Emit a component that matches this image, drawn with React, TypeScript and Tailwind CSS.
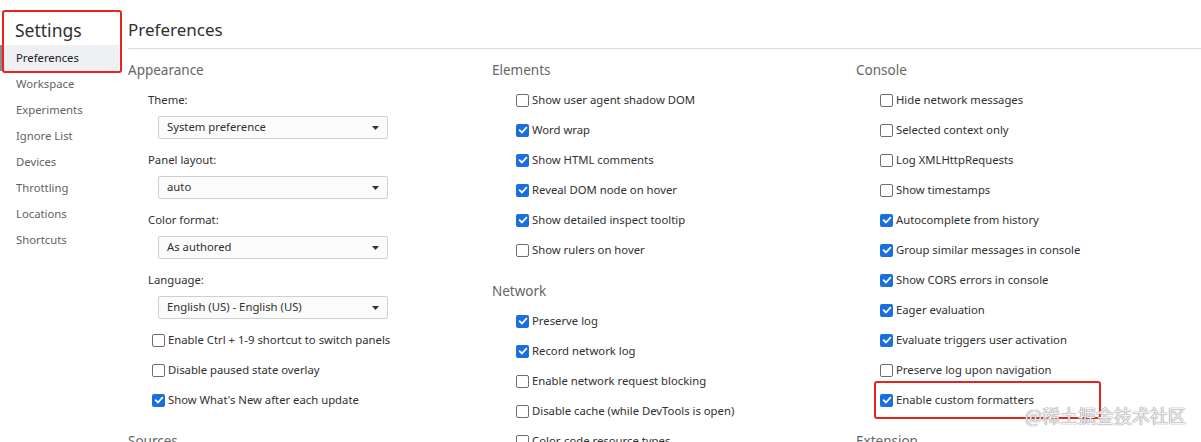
import React from "react";

type Item = { label: string; checked?: boolean };

const navItems = ["Preferences", "Workspace", "Experiments", "Ignore List", "Devices", "Throttling", "Locations", "Shortcuts"];

const selects = [
    { label: "Theme:", value: "System preference" },
    { label: "Panel layout:", value: "auto" },
    { label: "Color format:", value: "As authored" },
    { label: "Language:", value: "English (US) - English (US)" },
];

const appearanceChecks: Item[] = [
    { label: "Enable Ctrl + 1-9 shortcut to switch panels" },
    { label: "Disable paused state overlay" },
    { label: "Show What's New after each update", checked: true },
];

const elements: Item[] = [
    { label: "Show user agent shadow DOM" },
    { label: "Word wrap", checked: true },
    { label: "Show HTML comments", checked: true },
    { label: "Reveal DOM node on hover", checked: true },
    { label: "Show detailed inspect tooltip", checked: true },
    { label: "Show rulers on hover" },
];

const network: Item[] = [
    { label: "Preserve log", checked: true },
    { label: "Record network log", checked: true },
    { label: "Enable network request blocking" },
    { label: "Disable cache (while DevTools is open)" },
    { label: "Color-code resource types" },
];

const consoleItems: Item[] = [
    { label: "Hide network messages" },
    { label: "Selected context only" },
    { label: "Log XMLHttpRequests" },
    { label: "Show timestamps" },
    { label: "Autocomplete from history", checked: true },
    { label: "Group similar messages in console", checked: true },
    { label: "Show CORS errors in console", checked: true },
    { label: "Eager evaluation", checked: true },
    { label: "Evaluate triggers user activation", checked: true },
    { label: "Preserve log upon navigation" },
    { label: "Enable custom formatters", checked: true },
];

function Checkbox({ checked }: { checked?: boolean }) {
    if (checked) {
        return (
            <span className="flex-none size-[13px] rounded-[2px] bg-[#1a6fe0] flex items-center justify-center">
                <svg className="size-[10px]" viewBox="0 0 10 10" fill="none">
                    <path d="M1.6 5.2 L4 7.5 L8.4 2.6" stroke="white" strokeWidth="1.8" strokeLinecap="round" strokeLinejoin="round" />
                </svg>
            </span>
        );
    }
    return <span className="flex-none size-[13px] rounded-[2px] border border-[#6f6f6f] bg-white" />;
}

function CheckRow({ item }: { item: Item }) {
    return (
        <div className="h-[30px] flex items-center pl-[24px] gap-[3px] text-[#303030]">
            <Checkbox checked={item.checked} />
            <span className="whitespace-nowrap">{item.label}</span>
        </div>
    );
}

function Heading({ children, first }: { children: React.ReactNode; first?: boolean }) {
    return (
        <div className={`${first ? "mt-[11px]" : "mt-[16px]"} mb-[5px] leading-[20px] text-[13.5px] text-[#666]`}>{children}</div>
    );
}

export default function App() {
    return (
        <div className="relative w-[1201px] h-[442px] overflow-hidden bg-white font-['Noto_Sans',_sans-serif] text-[11.3px] flex">
            {/* Sidebar */}
            <aside className="w-[128px] flex-none">
                <div className="pl-[15px] pt-[17px] h-[45px] leading-[26px] text-[17.5px] text-[#303030]">Settings</div>
                <nav className="flex flex-col">
                    {navItems.map((n, i) => (
                        <div
                            key={n}
                            className={`h-[26px] flex items-center ${i === 0 ? "bg-[#eef0f3] text-[#202020] w-[119px] border-l-2 border-[#8a8a8a] pl-[14px]" : "pl-[16px] text-[#5f6368]"}`}
                        >
                            {n}
                        </div>
                    ))}
                </nav>
            </aside>

            {/* Main */}
            <main className="flex-1 flex flex-col">
                <div className="pt-[17px] pb-[5px] leading-[26px] text-[17px] text-[#303030] border-b border-[#dcdcdc]">Preferences</div>
                <div className="grid grid-cols-[364px_364px_345px]">
                    <section>
                        <Heading first>Appearance</Heading>
                        {selects.map((s, i) => (
                            <div key={s.label} className={i === 0 ? "pt-[5px]" : "pt-[11px]"}>
                                <div className="pl-[20px] h-[20px] flex items-center text-[#303030]">{s.label}</div>
                                <div className="ml-[30px] mt-[6px] w-[230px] h-[23px] flex items-center justify-between px-[8px] border border-[#cfcfcf] rounded-[2px] bg-[#fbfbfb] text-[#303030]">
                                    <span>{s.value}</span>
                                    <svg className="w-[7px] h-[4px]" viewBox="0 0 7 4">
                                        <path d="M0 0 H7 L3.5 4 Z" fill="#333" />
                                    </svg>
                                </div>
                            </div>
                        ))}
                        <div className="pt-[6px]">
                            {appearanceChecks.map((c) => (
                                <CheckRow key={c.label} item={c} />
                            ))}
                        </div>
                        <Heading>Sources</Heading>
                    </section>
                    <section>
                        <Heading first>Elements</Heading>
                        {elements.map((c) => (
                            <CheckRow key={c.label} item={c} />
                        ))}
                        <Heading>Network</Heading>
                        {network.map((c) => (
                            <CheckRow key={c.label} item={c} />
                        ))}
                    </section>
                    <section>
                        <Heading first>Console</Heading>
                        {consoleItems.map((c) => (
                            <CheckRow key={c.label} item={c} />
                        ))}
                        <Heading>Extension</Heading>
                    </section>
                </div>
            </main>

            {/* Annotation boxes */}
            <div className="absolute left-[2px] top-[10px] w-[120px] h-[63px] border-2 border-[#e8231e] rounded-[3px]" />
            <div className="absolute left-[874px] top-[381px] w-[227px] h-[38px] border-2 border-[#e8231e] rounded-[3px]" />
            <div className="absolute left-[1025px] top-[403px] text-[18px] leading-[24px] text-white/90 font-['Noto_Sans_CJK_SC',_sans-serif] [text-shadow:0_0_1px_#777,0_0_1px_#777]">
                @稀土掘金技术社区
            </div>
        </div>
    );
}
